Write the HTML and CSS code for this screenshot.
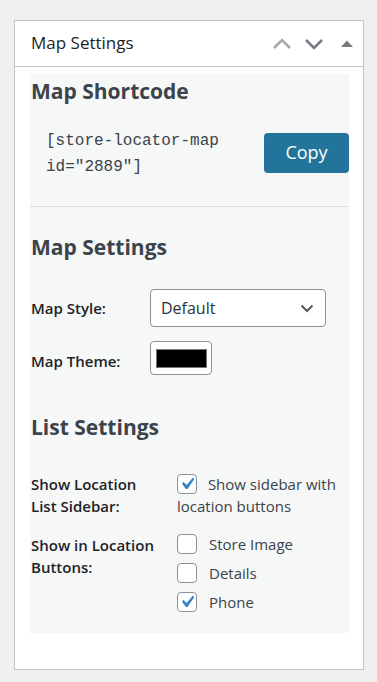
FILE: index.html
```html
<!DOCTYPE html>
<html>
<head>
<meta charset="utf-8">
<link rel="stylesheet" href="styles.css">
</head>
<body>
<div class="postbox">
  <div class="postbox-header">
    <h2 class="hndle">Map Settings</h2>
    <div class="handle-actions">
      <svg class="hicon" width="18" height="12" viewBox="0 0 18 12"><polyline points="1,10 9,2 17,10" fill="none" stroke="#a7aaad" stroke-width="2.6"/></svg>
      <svg class="hicon" width="18" height="12" viewBox="0 0 18 12"><polyline points="1,2 9,10 17,2" fill="none" stroke="#787c82" stroke-width="2.6"/></svg>
      <svg class="hicon tri" width="12" height="8" viewBox="0 0 12 8"><polygon points="0,7 6,0.5 12,7" fill="#787c82"/></svg>
    </div>
  </div>
  <div class="inside">
    <div class="panel">
      <section class="shortcode-sec">
        <h3 class="sec-title">Map Shortcode</h3>
        <div class="shortcode-row">
          <code class="shortcode">[store-locator-map id="2889"]</code>
          <button class="btn-copy" type="button">Copy</button>
        </div>
      </section>
      <section class="settings-sec">
        <h3 class="sec-title">Map Settings</h3>
        <div class="form-row row-style">
          <div class="lbl">Map Style:</div>
          <div class="select">
            <span>Default</span>
            <svg width="14" height="9" viewBox="0 0 14 9"><polyline points="1.5,1.5 7,7 12.5,1.5" fill="none" stroke="#50575e" stroke-width="2"/></svg>
          </div>
        </div>
        <div class="form-row row-theme">
          <div class="lbl">Map Theme:</div>
          <div class="color-input"><span class="swatch"></span></div>
        </div>
        <h3 class="sec-title list-title">List Settings</h3>
        <div class="form-row2 row-sidebar">
          <div class="lbl2">Show Location<br>List Sidebar:</div>
          <div class="wrap-text"><span class="cb cb-inline"><svg viewBox="0 0 20 20"><path d="M14.83 4.89l1.34.94-5.81 8.38H9.02L5.78 9.67l1.34-1.25 2.57 2.4z" fill="#3582c4"/></svg></span> Show sidebar with location buttons</div>
        </div>
        <div class="form-row2 row-buttons">
          <div class="lbl2">Show in Location<br>Buttons:</div>
          <div class="cb-list">
            <div class="cb-item"><span class="cb"></span><span>Store Image</span></div>
            <div class="cb-item"><span class="cb"></span><span>Details</span></div>
            <div class="cb-item"><span class="cb"><svg viewBox="0 0 20 20"><path d="M14.83 4.89l1.34.94-5.81 8.38H9.02L5.78 9.67l1.34-1.25 2.57 2.4z" fill="#3582c4"/></svg></span><span>Phone</span></div>
          </div>
        </div>
      </section>
    </div>
  </div>
</div>
</body>
</html>
```
FILE: styles.css
```css
* { box-sizing: border-box; }
html, body { margin: 0; padding: 0; }
body {
  background: #f0f0f1;
  font-family: "Open Sans", "Noto Sans", sans-serif;
  color: #3c434a;
  padding: 20px 13px 13px 14px;
}
.postbox {
  width: 350px;
  background: #fff;
  border: 1px solid #c3c4c7;
}
.postbox-header {
  height: 46px;
  border-bottom: 1px solid #c3c4c7;
  display: flex;
  align-items: center;
  justify-content: space-between;
  padding: 0 9px 0 16px;
}
.hndle {
  margin: 0;
  font-size: 17px;
  font-weight: 500;
  color: #1d2327;
  line-height: 24px;
  padding-bottom: 2px;
}
.handle-actions {
  display: flex;
  align-items: center;
  gap: 14px;
}
.hicon { display: block; }
.tri { margin-left: 4px; margin-right: 1px; }
.inside {
  padding: 7px 14px 36px 15px;
}
.panel {
  background: #f6f7f7;
  display: flex;
  flex-direction: column;
}
.sec-title {
  margin: 0;
  font-size: 21px;
  font-weight: 700;
  line-height: 28px;
  color: #3c434a;
  padding-left: 1px;
}
.shortcode-sec {
  padding-top: 3px;
  padding-bottom: 26px;
  border-bottom: 1px solid #dcdcde;
}
.shortcode-row {
  display: flex;
  align-items: center;
  justify-content: space-between;
  margin-top: 23px;
  padding-left: 16px;
}
.shortcode {
  font-family: "Liberation Mono", "DejaVu Sans Mono", monospace;
  font-size: 16px;
  line-height: 26px;
  width: 190px;
  color: #3c434a;
}
.btn-copy {
  width: 85px;
  height: 40px;
  background: #22749a;
  border: none;
  border-radius: 4px;
  color: #fff;
  font-family: "Open Sans", "Noto Sans", sans-serif;
  font-size: 18px;
  padding: 0 0 2px;
  margin-top: -2px;
}
.settings-sec {
  padding-top: 26px;
  padding-bottom: 21px;
}
.form-row {
  display: flex;
  align-items: center;
}
.lbl, .lbl2 {
  font-size: 15px;
  font-weight: 600;
  color: #1d2327;
  padding-left: 1px;
  line-height: 22px;
}
.lbl { width: 120px; }
.lbl2 { width: 147px; }
.row-style { margin-top: 28px; }
.row-theme { margin-top: 14px; }
.row-theme .lbl { padding-top: 6px; }
.select {
  width: 176px;
  height: 38px;
  border: 1px solid #8c8f94;
  border-radius: 4px;
  background: #fff;
  display: flex;
  align-items: center;
  justify-content: space-between;
  padding: 0 11px 0 10px;
  font-size: 16px;
  color: #2c3338;
}
.select svg { display: block; }
.color-input {
  width: 62px;
  height: 34px;
  border: 1px solid #8c8f94;
  border-radius: 4px;
  background: #fff;
  display: flex;
  align-items: center;
  justify-content: center;
}
.swatch {
  width: 51px;
  height: 19px;
  background: #000;
  border: 1px solid #777;
}
.list-title { margin-top: 38px; }
.form-row2 {
  display: flex;
  align-items: flex-start;
}
.row-sidebar { margin-top: 32px; }
.row-buttons { margin-top: 17px; }
.wrap-text {
  font-size: 15px;
  line-height: 22px;
  width: 170px;
  color: #3c434a;
}
.cb {
  display: inline-block;
  width: 20px;
  height: 20px;
  border: 1px solid #8c8f94;
  border-radius: 4px;
  background: #fff;
  vertical-align: middle;
  position: relative;
}
.cb svg {
  display: block;
  width: 24px;
  height: 24px;
  margin: -3px 0 0 -3px;
}
.cb-inline { margin: -4px 7px 0 0; }
.cb-list {
  display: flex;
  flex-direction: column;
  gap: 9px;
}
.cb-item {
  display: flex;
  align-items: center;
  gap: 12px;
  font-size: 15px;
  line-height: 20px;
  color: #3c434a;
}
```
